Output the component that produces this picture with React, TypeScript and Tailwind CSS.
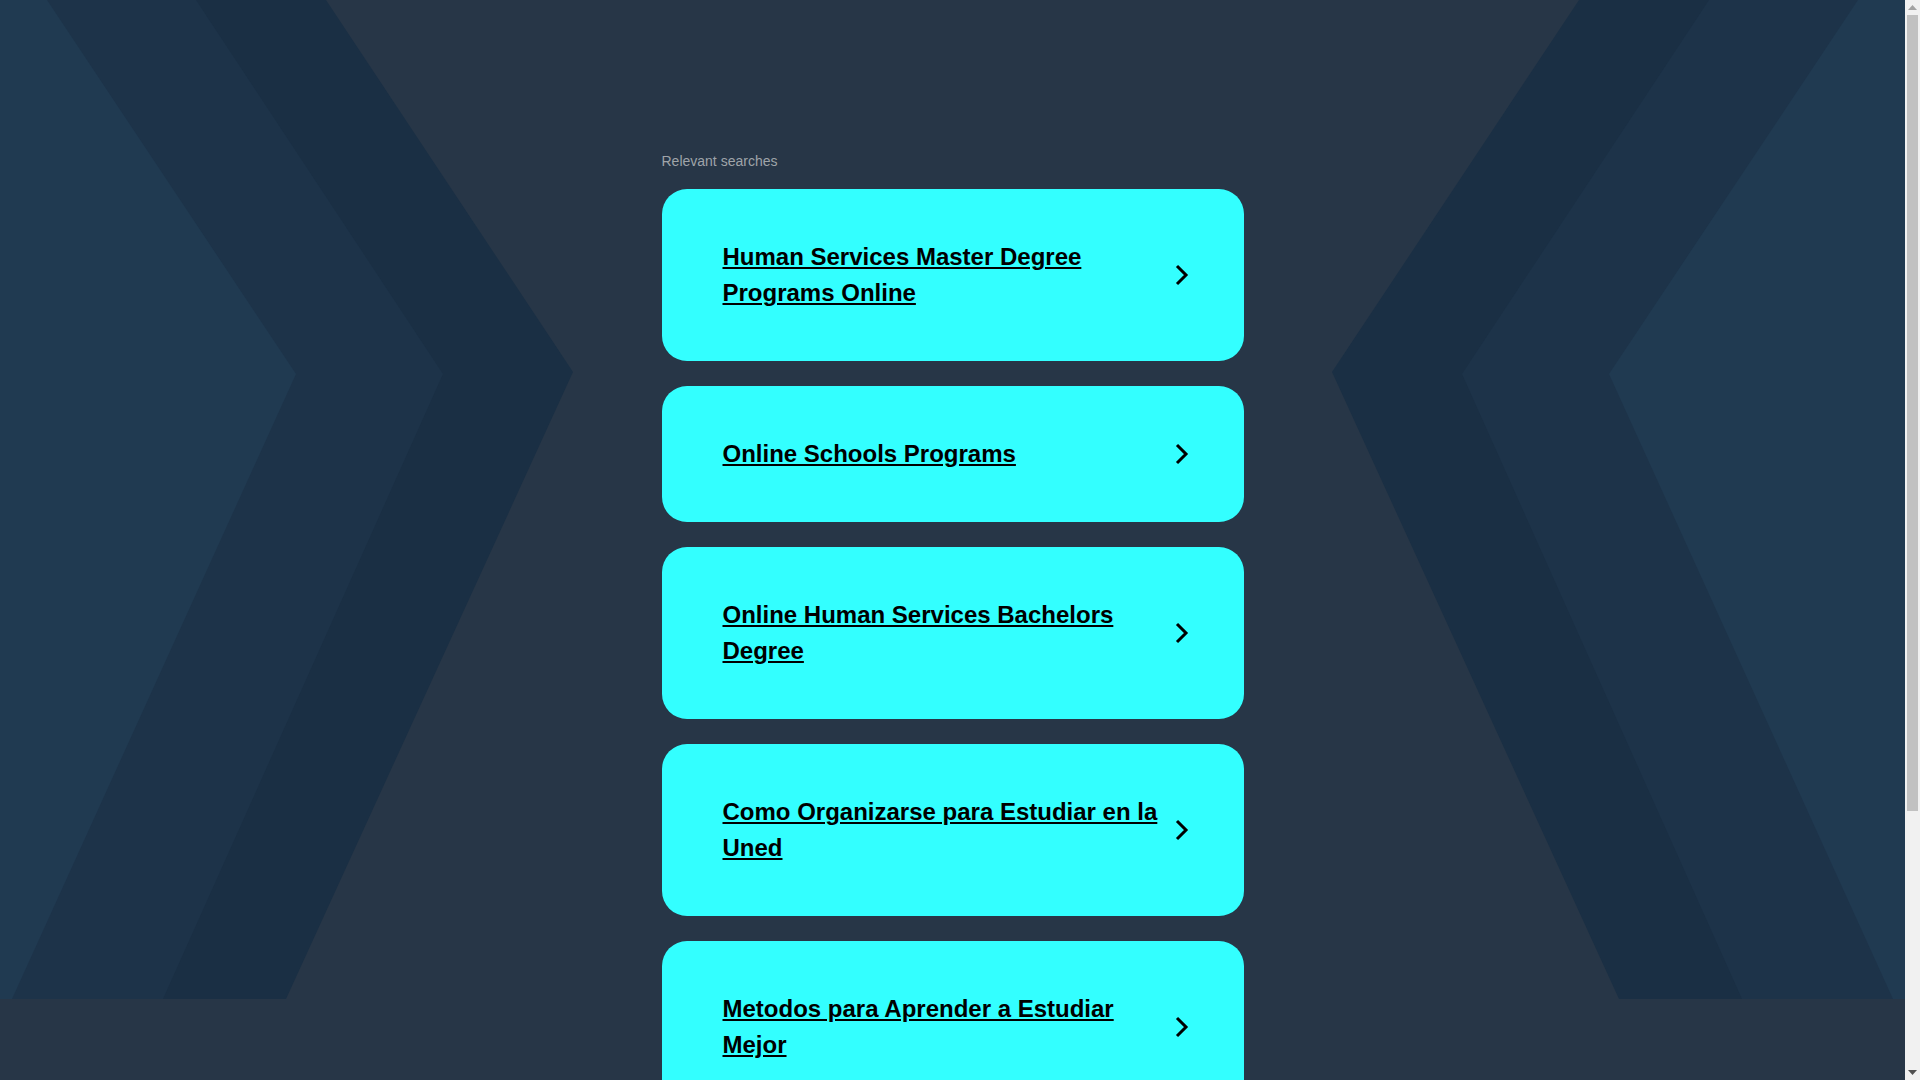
const searches = [
  'Human Services Master Degree Programs Online',
  'Online Schools Programs',
  'Online Human Services Bachelors Degree',
  'Como Organizarse para Estudiar en la Uned',
  'Metodos para Aprender a Estudiar Mejor',
];

function Chevrons({ className }: { className?: string }) {
  return (
    <svg className={className} width="574" height="999" viewBox="0 0 574 999" preserveAspectRatio="none">
      <polygon points="0,0 326,0 573,372 286,999 0,999" fill="#1a2f44" />
      <polygon points="0,0 196,0 443,374 163,999 0,999" fill="#1d3349" />
      <polygon points="0,0 47,0 296,374 12,999 0,999" fill="#203a51" />
    </svg>
  );
}

function Arrow() {
  return (
    <svg className="shrink-0 ml-[8px]" width="14" height="22" viewBox="0 0 14 22">
      <polyline points="2,2 11,11 2,20" fill="none" stroke="#000" strokeWidth="3" />
    </svg>
  );
}

function Scrollbar() {
  return (
    <div className="w-[15px] shrink-0 h-screen bg-[#f1f1f1] flex flex-col items-center">
      <div className="h-[15px] w-full flex items-center justify-center">
        <svg width="9" height="5" viewBox="0 0 9 5">
          <polygon points="0,5 4.5,0 9,5" fill="#a3a3a3" />
        </svg>
      </div>
      <div className="w-[11px] h-[796px] bg-[#c1c1c1]" />
      <div className="flex-1" />
      <div className="h-[15px] w-full flex items-center justify-center">
        <svg width="9" height="5" viewBox="0 0 9 5">
          <polygon points="0,0 4.5,5 9,0" fill="#505050" />
        </svg>
      </div>
    </div>
  );
}

export default function App() {
  return (
    <div className="flex h-screen overflow-hidden font-['Liberation_Sans',Arial,sans-serif]">
      <div className="relative flex-1 h-screen overflow-hidden bg-[#273647]">
        <div className="absolute top-0 left-0 right-0 h-[999px] overflow-hidden pointer-events-none">
          <Chevrons className="absolute top-0 left-0" />
          <Chevrons className="absolute top-0 right-0 -scale-x-100" />
        </div>

        <div className="relative mx-auto w-[582px] pt-[151px] pb-[313px]">
          <p className="text-[14px] leading-[20px] text-[#9fa4a9] mb-[18px]">Relevant searches</p>
          <div className="flex flex-col gap-[25px]">
            {searches.map((s) => (
              <a
                key={s}
                href="#"
                className="flex items-center rounded-[25px] bg-[#33ffff] pl-[61px] pr-[55px] py-[50px]"
              >
                <span className="flex-1 text-[24px] leading-[36px] font-bold text-black underline">{s}</span>
                <Arrow />
              </a>
            ))}
          </div>
        </div>
      </div>
      <Scrollbar />
    </div>
  );
}
